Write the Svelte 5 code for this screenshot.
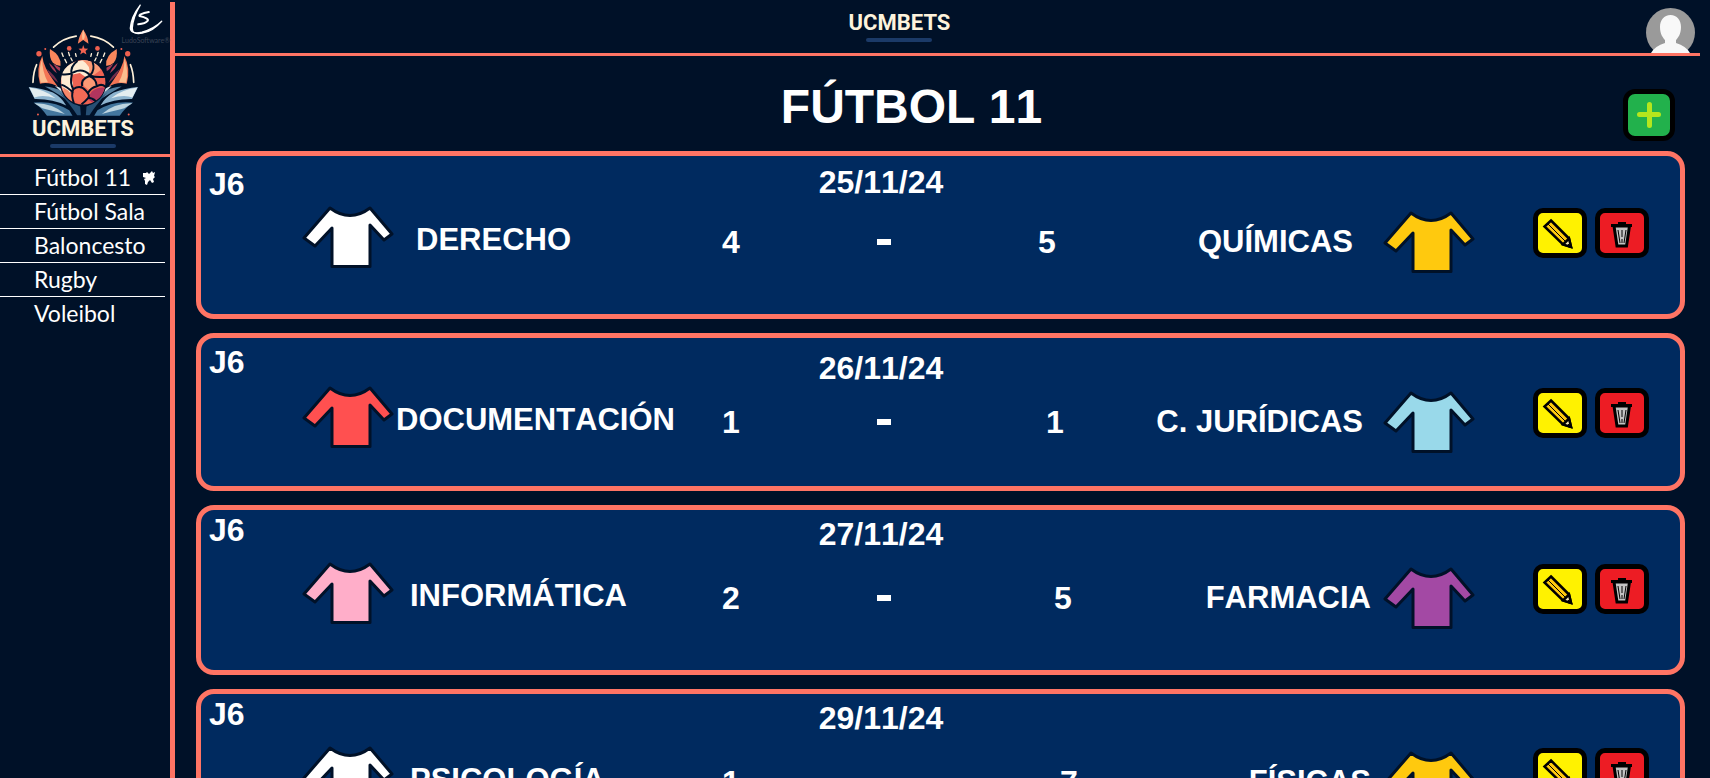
<script>
  const sports = ['Fútbol 11', 'Fútbol Sala', 'Baloncesto', 'Rugby', 'Voleibol'];
  let selected = $state('Fútbol 11');

  const matches = [
    { round: 'J6', date: '25/11/24', size: 'regular', step: 0,
      home: { name: 'DERECHO', goals: 4, color: '#ffffff', space: 'far' },
      away: { name: 'QUÍMICAS', goals: 5, color: '#ffc90e', space: 'far' } },
    { round: 'J6', date: '26/11/24', size: 'short', step: 1,
      home: { name: 'DOCUMENTACIÓN', goals: 1, color: '#ff5050', space: 'near' },
      away: { name: 'C. JURÍDICAS', goals: 1, color: '#99d9ea', space: 'wide' } },
    { round: 'J6', date: '27/11/24', size: 'tall', step: 2,
      home: { name: 'INFORMÁTICA', goals: 2, color: '#ffaec9', space: 'mid' },
      away: { name: 'FARMACIA', goals: 5, color: '#a349a4', space: 'mid' } },
    { round: 'J6', date: '29/11/24', size: 'tall', step: 3,
      home: { name: 'PSICOLOGÍA', goals: 1, color: '#ffffff', space: 'mid' },
      away: { name: 'FÍSICAS', goals: 7, color: '#ffc90e', space: 'mid' } }
  ];
</script>

{#snippet wordmark()}
  <span class="wordmark"><span class="word">UCMBETS</span><span class="bar"></span></span>
{/snippet}

{#snippet shirt(color)}
  <svg viewBox="0 0 92 62" width="92" height="62" aria-hidden="true">
    <path d="M28 2 Q48 17 68 2 L90 28 L82 34 L68 19 V60.5 H30 V22 L13 40 L2 32 Z"
      fill={color} stroke="#001128" stroke-width="3" stroke-linejoin="round" />
  </svg>
{/snippet}

<div class="shell">
  <aside>
    <div class="brand">
      <svg viewBox="80 80 340 270" width="113" height="90" aria-hidden="true">
        <g fill="none" stroke="#fdf0d8" stroke-width="5" stroke-linecap="round">
          <path d="M160 140 Q188 113 228 107 M272 107 Q312 113 340 140" />
          <path d="M98 246 Q99 215 109 193 M401 246 Q400 215 391 193" />
          <path stroke-width="4" d="M185 158 L189 168 M194 177 L199 187 M205 156 L208 166 M212 173 L216 181 M226 160 L228 168 M274 160 L272 168 M294 156 L291 166 M288 173 L284 181 M314 158 L310 168 M305 177 L300 187" />
        </g>
        <path d="M249 87 Q235 110 233 130 L249 119 L265 130 Q264 109 249 87Z" fill="#f9805c" />
        <path d="M249 87 Q242 112 249 119 Q259 110 249 87Z" fill="#fdc095" />
        <path d="M249 134 L253 144 L264 145 L256 152 L259 162 L249 156 L240 162 L243 152 L235 145 L246 144Z" fill="#f26351" />
        <g fill="#ef604f">
          <circle cx="207" cy="144" r="7" /><circle cx="292" cy="144" r="7" />
          <circle cx="116" cy="160" r="8" /><circle cx="383" cy="160" r="8" />
          <circle cx="135" cy="146" r="3" /><circle cx="364" cy="146" r="3" />
          <circle cx="113" cy="343" r="3" /><circle cx="386" cy="343" r="3" />
        </g>
        {#each ['', 'translate(499 0) scale(-1 1)'] as flip}
          <g transform={flip}>
            <path d="M126 167 Q106 205 119 250 Q151 244 174 261 Q147 224 137 204 Q128 187 126 167Z" fill="#f37555" />
            <path d="M126 173 Q112 216 121 247 Q133 246 143 246 Q125 214 126 173Z" fill="#fbbd8e" />
            <path d="M149 146 Q146 174 158 187 Q171 198 181 196 Q184 166 149 146Z" fill="#f9875c" />
            <path d="M146 188 Q153 207 170 219 Q164 201 146 188Z M159 190 Q171 210 179 212 L180 202Z" fill="#a83d58" />
            <path d="M140 206 Q148 229 174 247 Q165 226 140 206Z" fill="#732d4b" />
            <path d="M85 260 Q124 263 158 277 Q183 290 198 316 Q158 295 103 296Z" fill="#8db4cf" />
            <path d="M87 262 Q136 269 166 294 Q126 282 102 292Z" fill="#e3edf0" />
            <path d="M134 259 Q191 262 218 310 Q181 286 134 259Z" fill="#547f9f" />
            <path d="M164 257 Q188 262 207 288 Q190 282 164 257Z" fill="#dae7ec" />
            <path d="M100 307 Q160 300 207 330 L217 347 H140 Q126 325 100 307Z" fill="#44779e" />
            <path d="M102 309 Q154 307 194 341 Q145 329 126 324Z" fill="#bdd4df" />
            <path d="M177 276 Q216 308 240 319 L242 345 H231 Q214 318 177 276Z" fill="#264f74" />
          </g>
        {/each}
        <circle cx="249" cy="247" r="70" fill="#001128" />
        <circle cx="249" cy="246" r="67" fill="#ed6252" />
        <path d="M183 235 Q188 189 246 180 Q282 181 299 204 L275 228 L255 229 L239 218 L211 224 L219 252 L205 290 Q181 270 183 235Z" fill="#fdecd3" />
        <path d="M246 180 Q286 182 302 209 L277 227 L266 222 Q275 198 246 180Z" fill="#fa9a75" />
        <path d="M188 261 Q191 289 216 303 L217 286 L203 270Z" fill="#f68869" />
        <path d="M221 269 Q241 253 258 271 L264 291 L247 309 Q223 307 215 292Z" fill="#f26a56" />
        <path d="M275 274 Q291 259 314 262 Q306 296 275 306 L261 294Z" fill="#b2355e" />
        <path d="M249 237 Q265 225 280 234 L290 257 L270 272 L250 256Z" fill="#fb9a75" />
        <g fill="none" stroke="#001128" stroke-width="6">
          <path d="M184 222 Q207 225 222 215 Q248 203 270 225 Q286 233 317 229 M232 182 Q208 199 215 222 Q208 252 220 267 M183 253 Q202 259 219 278 M219 267 Q240 252 257 271 Q270 286 265 292 Q255 304 244 312 M219 267 Q212 283 221 309 M246 258 Q241 237 267 227 Q289 235 290 258 Q271 263 264 278 M290 258 Q304 249 316 259 M277 184 Q286 208 270 225 M262 292 Q277 293 287 303" />
        </g>
      </svg>
      {@render wordmark()}
      <div class="maker">
        <svg viewBox="385 0 112 102" width="37" height="34" aria-hidden="true">
          <path d="M425 9 Q397 45 395 79 Q397 98 430 91 Q467 81 490 58 Q463 89 431 94 Q400 99 401 79 Q403 45 425 9Z" fill="#fff" stroke="#fff" stroke-width="4" stroke-linejoin="round" />
          <path d="M451 30 Q419 36 423 42 Q452 49 448 56 Q441 65 419 67" fill="none" stroke="#fff" stroke-width="6" stroke-linecap="round" />
        </svg>
        <span>LudoSoftware®</span>
      </div>
    </div>
    <nav>
      {#each sports as sport}
        <a href="#{sport}" onclick={() => (selected = sport)}>
          {sport}
          {#if sport === selected}
            <svg viewBox="0 0 14 14" width="14" height="14" aria-hidden="true">
              <path d="M1 2 L4 2 L5 1 L7 3 L10 0 L11 2 L13 1 L12 5 L13 6 L11 8 L12 11 L10 12 L8 9 L6 11 L5 14 L3 13 L3 10 L2 8 L4 7 L1 6Z" fill="#fff" />
            </svg>
          {/if}
        </a>
      {/each}
    </nav>
  </aside>

  <main>
    <header>
      <div class="center">{@render wordmark()}</div>
      <button class="avatar" aria-label="Perfil">
        <svg viewBox="0 0 49 45" width="49" height="45" aria-hidden="true">
          <circle cx="24.5" cy="24.5" r="24.5" fill="#9a9a9a" />
          <path d="M24.5 7 C31 7 35 12 35 19 C35 26 32 30 30 32 V35 Q40 38 44 45 H5 Q9 38 19 35 V32 C17 30 14 26 14 19 C14 12 18 7 24.5 7Z" fill="#f8f8f8" />
        </svg>
      </button>
    </header>

    <div class="title">
      <h1>FÚTBOL 11</h1>
      <button class="add" aria-label="Añadir partido">
        <svg viewBox="0 0 24 26" width="24" height="26" aria-hidden="true">
          <path d="M2.5 12.5 H21.5 M12.5 2.5 V23.5" stroke="#b5e61d" stroke-width="5" stroke-linecap="round" />
        </svg>
      </button>
    </div>

    <section>
      {#each matches as m}
        <article class="card {m.size} step-{m.step}">
          <span class="round">{m.round}</span>
          <time>{m.date}</time>
          <span class="shirt home">{@render shirt(m.home.color)}</span>
          <span class="name home {m.home.space}">{m.home.name}</span>
          <span class="goals home">{m.home.goals}</span>
          <span class="dash"></span>
          <span class="goals away">{m.away.goals}</span>
          <span class="name away {m.away.space}">{m.away.name}</span>
          <span class="shirt away">{@render shirt(m.away.color)}</span>
          <span class="actions">
            <button class="edit" aria-label="Editar">
              <svg viewBox="5 5 44 40" width="44" height="40" aria-hidden="true">
                <path d="M18 12.5 L36 30.5 L38 39 L30 36.5 L11.5 18.5Z" fill="#ffc90e" stroke="#000" stroke-width="2.5" />
                <path d="M36 30.5 L38 39 L30 36.5Z" fill="#f5e6b5" stroke="#000" stroke-width="2.5" />
                <path d="M15 16 L33 34" stroke="#000" stroke-width="1" />
                <path d="M35.5 36 L39 39.5 L35 38.5Z" fill="#000" stroke="#000" />
              </svg>
            </button>
            <button class="delete" aria-label="Eliminar">
              <svg viewBox="5 5 44 40" width="44" height="40" aria-hidden="true">
                <path d="M19 18 H34.5 L31.5 38 H22Z" fill="#c3c3c3" stroke="#000" stroke-width="3" />
                <path d="M16 16 H23 V14 H31 V16 H37 V19 H16Z" fill="#000" />
                <path d="M23 22 L25 35 M27 22 V29 M27 31 V35 M31 22 L29 35" stroke="#000" stroke-width="1" />
              </svg>
            </button>
          </span>
        </article>
      {/each}
    </section>
  </main>
</div>

<style>
  :global(body) { background: #001128; }

  .shell {
    --line: #ff7464;
    display: flex;
    height: 100vh;
    overflow: hidden;
    background: #001128;
    color: #fff;
    font-family: "Liberation Sans", Arial, sans-serif;
    font-kerning: none;
  }
  svg { display: block; flex: none; }
  button { box-sizing: border-box; padding: 0; font: inherit; cursor: pointer; }

  aside {
    flex: 0 0 170px;
    margin-top: 2px;
    border-right: 5px solid var(--line);
  }
  .brand {
    position: relative;
    display: flex;
    flex-direction: column;
    align-items: center;
    padding: 25px 4px 6px 0;
    border-bottom: 3px solid var(--line);
  }
  .wordmark {
    display: flex;
    flex-direction: column;
    align-items: center;
    gap: 4px;
  }
  .word {
    color: #fdf3dc;
    font: bold 22px/23px Roboto, "Liberation Sans", sans-serif;
  }
  .bar { width: 66px; height: 4px; border-radius: 2px; background: #1b3a68; }
  .maker {
    position: absolute;
    top: 0;
    right: 0;
    display: flex;
    flex-direction: column;
    align-items: center;
    color: #3a4355;
    font: 7px/8px Lato, sans-serif;
  }

  nav { display: flex; flex-direction: column; padding: 4px 5px 0 0; }
  nav a {
    display: flex;
    align-items: center;
    justify-content: space-between;
    height: 33px;
    padding: 0 9px 0 34px;
    border-bottom: 1px solid #fff;
    color: #fff;
    font: 23px/33px Lato, sans-serif;
    text-decoration: none;
  }
  nav a:last-child { border-bottom: 0; }

  main { flex: 1; min-width: 0; display: flex; flex-direction: column; }
  header {
    display: flex;
    flex: none;
    align-items: flex-end;
    height: 53px;
    margin-right: 10px;
    border-bottom: 3px solid var(--line);
  }
  .center { flex: 1; display: flex; justify-content: center; padding-bottom: 11px; }
  .avatar { margin: 0 5px 0 22px; border: 0; background: none; }

  .title { display: flex; flex: none; align-items: flex-end; padding: 23px 35px 10px 25px; }
  h1 {
    flex: 1;
    margin: 0;
    padding-bottom: 6px;
    font-size: 48px;
    line-height: 56px;
    text-align: center;
  }
  .add {
    display: grid;
    place-items: center;
    width: 52px;
    height: 52px;
    border: 5px solid #000;
    border-radius: 12px;
    background: #22b14c;
  }

  section { display: flex; flex-direction: column; gap: 14px; padding: 0 25px 14px 21px; }
  .card {
    --round-top: 10px;
    --date-top: 8px;
    --head: 50px;
    --foot: 36px;
    display: grid;
    flex: none;
    grid-template-columns:
      101px 92px minmax(0, 297fr) minmax(0, 80fr) minmax(0, 226fr)
      minmax(0, 100fr) minmax(0, 286fr) 92px 205px;
    grid-template-rows: var(--head) 72px;
    align-items: center;
    padding-bottom: var(--foot);
    border: 5px solid var(--line);
    border-radius: 18px;
    background: #002a5f;
    font-size: 32px;
    font-weight: bold;
    line-height: 36px;
    white-space: nowrap;
  }
  .short { --round-top: 6px; --date-top: 12px; --head: 48px; --foot: 28px; }
  .tall { --round-top: 2px; --date-top: 6px; --head: 52px; }

  .round, time { grid-row: 1; align-self: start; }
  .round { grid-column: 1; padding: var(--round-top) 0 0 8px; }
  time { grid-column: 5; padding: var(--date-top) 6px 0 0; text-align: center; }

  .shirt, .name, .goals, .dash, .actions { grid-row: 2; }
  .shirt.home { grid-column: 2; align-self: start; }
  .shirt.away { grid-column: 8; }
  .name { font-size: 31px; }
  .name.home { grid-column: 3; padding-bottom: 4px; }
  .name.away { grid-column: 7; text-align: right; }
  .name.home.near { padding-left: 2px; }
  .name.home.mid { padding-left: 16px; }
  .name.home.far { padding-left: 22px; }
  .name.away.mid { padding-right: 12px; }
  .name.away.wide { padding-right: 20px; }
  .name.away.far { padding-right: 30px; }
  .goals { text-align: center; }
  .goals.home { grid-column: 4; }
  .goals.away { grid-column: 6; }
  .step-1 .goals.away { padding-left: 16px; }
  .step-2 .goals.away { padding-left: 32px; }
  .step-3 .goals.away { padding-left: 44px; }
  .dash { grid-column: 5; justify-self: center; width: 14px; height: 6px; background: #fff; }

  .actions {
    grid-column: 9;
    display: flex;
    justify-content: flex-end;
    align-self: start;
    gap: 8px;
    padding: 2px 31px 0 0;
  }
  .actions button {
    width: 54px;
    height: 50px;
    border: 5px solid #000;
    border-radius: 10px;
  }
  .edit { background: #fff200; }
  .delete { background: #ed1c24; }
</style>
